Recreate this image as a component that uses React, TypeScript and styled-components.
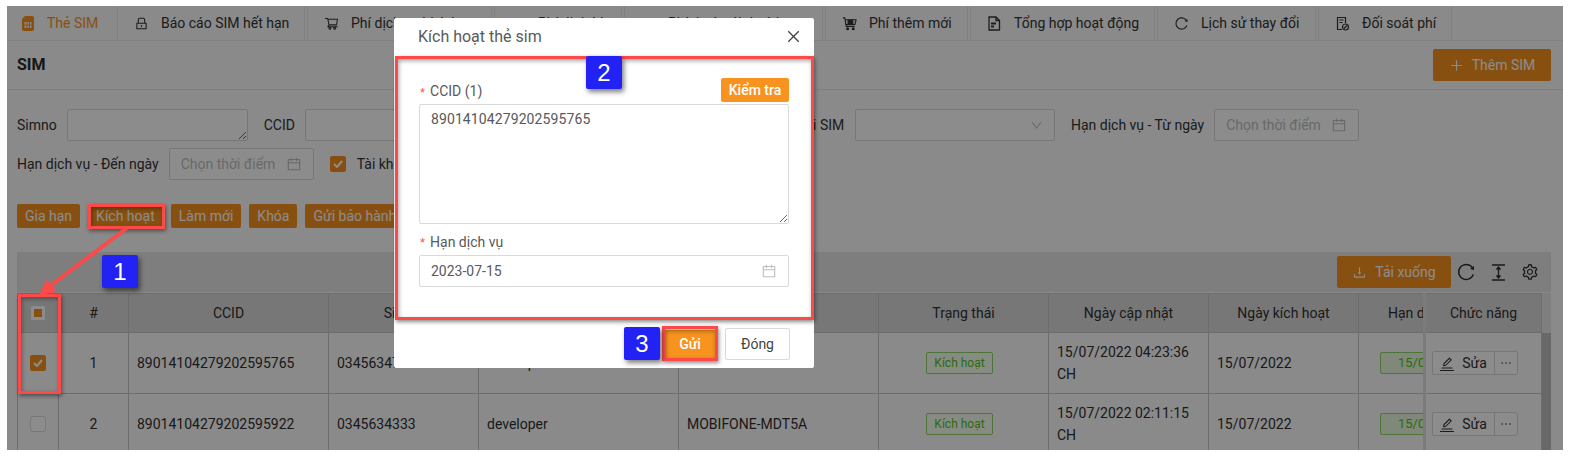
import React from "react";
import styled, { createGlobalStyle } from "styled-components";
import {
  AiOutlineCalendar,
  AiOutlineClose,
  AiOutlineDown,
  AiOutlineDownload,
  AiOutlineEdit,
  AiOutlineEllipsis,
  AiOutlineLock,
  AiOutlinePlus,
  AiOutlineReload,
  AiOutlineSetting,
  AiOutlineShoppingCart,
} from "react-icons/ai";

const ORANGE = "#f7931e";
const RED = "#fa4a4a";

const Global = createGlobalStyle`
  html, body { margin: 0; padding: 0; background: #fff; }
  body { font-family: Roboto, "Noto Sans", sans-serif; font-size: 14px; color: #333; }
  * { box-sizing: border-box; }
`;

const Stage = styled.div`
  position: relative;
  width: 1569px;
  height: 456px;
  overflow: hidden;
  padding: 6px 6px 6px 7px;
`;
const Page = styled.div`
  position: relative;
  height: 444px;
  overflow: hidden;
  background: #fbfbfb;
`;
const Overlay = styled.div`
  position: absolute;
  inset: 6px 6px 6px 7px;
  background: rgba(0, 0, 0, 0.45);
`;

const Tabs = styled.div`
  display: flex;
  gap: 2px;
  height: 35px;
  border-bottom: 1px solid #ececec;
`;
const Tab = styled.div<{ $active?: boolean; $w: number }>`
  display: flex;
  align-items: center;
  flex: none;
  width: ${(p) => p.$w}px;
  padding-left: ${(p) => (p.$active ? 15 : 16)}px;
  white-space: nowrap;
  color: ${(p) => (p.$active ? ORANGE : "#333")};
  border-right: ${(p) => (p.$active ? "0" : "1px solid #ececec")};
  border-left: ${(p) => (p.$active ? "0" : "1px solid #ececec")};
`;
const TabIcon = styled.span<{ $active?: boolean }>`
  display: inline-flex;
  width: ${(p) => (p.$active ? 25 : 27)}px;
  flex: none;
  font-size: 15px;
`;

const Header = styled.div`
  display: flex;
  align-items: center;
  justify-content: space-between;
  height: 49px;
  padding: 0 12px 0 10px;
  border-bottom: 1px solid #e6e6e6;
`;
const Title = styled.div`
  margin-bottom: 2px;
  font-size: 16px;
  font-weight: 700;
  color: #2a2a2a;
`;
const PrimaryButton = styled.div<{ $w: number }>`
  display: flex;
  align-items: center;
  justify-content: center;
  gap: 8px;
  width: ${(p) => p.$w}px;
  height: 32px;
  color: #fff;
  background: ${ORANGE};
  border-radius: 2px;
`;

const Filters = styled.div`
  display: flex;
  flex-direction: column;
  gap: 7px;
  padding: 19px 0 0 10px;
`;
const FilterRow = styled.div`
  display: flex;
  align-items: center;
  height: 32px;
`;
const FilterLabel = styled.label<{ $w?: number }>`
  flex: none;
  width: ${(p) => (p.$w ? `${p.$w}px` : "auto")};
  margin-right: 10px;
  white-space: nowrap;
`;
const FilterArea = styled.textarea`
  display: block;
  flex: none;
  width: 181px;
  height: 32px;
  min-height: 32px;
  margin: 0 16px 0 0;
  background: #fff;
  border: 1px solid #d9d9d9;
  border-radius: 2px;
  outline: none;
  font: inherit;
`;
const SelectBox = styled.div`
  display: flex;
  align-items: center;
  justify-content: flex-end;
  flex: none;
  width: 200px;
  height: 32px;
  margin-right: 16px;
  padding-right: 11px;
  color: #bfbfbf;
  font-size: 13px;
  background: #fff;
  border: 1px solid #d9d9d9;
  border-radius: 2px;
`;
const DateBox = styled.div<{ $w?: number }>`
  display: flex;
  align-items: center;
  justify-content: space-between;
  flex: none;
  width: ${(p) => (p.$w ? `${p.$w}px` : "100%")};
  height: 32px;
  padding: 0 11px;
  color: ${(p) => (p.$w ? "#bfbfbf" : "#595959")};
  background: #fff;
  border: 1px solid #d9d9d9;
  border-radius: 2px;
  svg { color: #bfbfbf; font-size: 16px; }
`;
const CheckLabel = styled.div`
  display: flex;
  align-items: center;
  gap: 11px;
  margin-left: 16px;
  white-space: nowrap;
`;
const CheckBox = styled.span<{ $on?: boolean; $mixed?: boolean }>`
  display: inline-flex;
  align-items: center;
  justify-content: center;
  flex: none;
  width: 16px;
  height: 16px;
  color: #fff;
  background: ${(p) => (p.$on ? ORANGE : "#fff")};
  border: 1px solid ${(p) => (p.$on ? ORANGE : "#d9d9d9")};
  border-radius: 2px;
  &::after {
    content: "";
    display: ${(p) => (p.$mixed ? "block" : "none")};
    width: 8px;
    height: 8px;
    background: ${ORANGE};
  }
`;
const Actions = styled.div`
  display: flex;
  gap: 8px;
  margin: 24px 0 24px 10px;
`;
const ActionButton = styled.div`
  display: flex;
  align-items: center;
  height: 24px;
  padding: 0 8px;
  color: #fff;
  background: ${ORANGE};
  border-radius: 2px;
  white-space: nowrap;
`;

const Toolbar = styled.div`
  display: flex;
  align-items: center;
  justify-content: flex-end;
  width: 1534px;
  height: 40px;
  margin-left: 10px;
  padding-right: 12px;
  background: #e6e6e6;
`;
const ToolIcons = styled.div`
  display: flex;
  align-items: center;
  gap: 16px;
  margin-left: 5px;
  color: #2e2e2e;
  font-size: 17px;
  svg { display: block; }
`;

const TableWrap = styled.div`
  display: flex;
  width: 1534px;
  margin: 1px 0 0 10px;
`;
const Scroller = styled.div`
  width: 1406px;
  flex: none;
  overflow: hidden;
`;
const FixedPane = styled.div`
  width: 119px;
  flex: none;
  border-left: 3px solid #dedede;
`;
const ScrollBar = styled.div`
  width: 9px;
  flex: none;
  background: linear-gradient(#e8e8e8 40px, #bdbdbd 40px);
`;
const Row = styled.div<{ $head?: boolean; $cols: string }>`
  display: grid;
  grid-template-columns: ${(p) => p.$cols};
  height: ${(p) => (p.$head ? 40 : 61)}px;
  background: ${(p) => (p.$head ? "#d9d9d9" : "#fcfcfc")};
  border-bottom: 1px solid #c6c6c6;
  border-top: ${(p) => (p.$head ? "1px solid #c6c6c6" : "0")};
  width: max-content;
`;
const Cell = styled.div<{ $head?: boolean; $center?: boolean; $first?: boolean }>`
  display: flex;
  align-items: center;
  justify-content: ${(p) => (p.$head || p.$center ? "center" : "flex-start")};
  padding: 0 8px;
  line-height: 22px;
  color: #303030;
  white-space: ${(p) => (p.$head ? "nowrap" : "normal")};
  border-right: 1px solid #c6c6c6;
  border-left: ${(p) => (p.$first ? "1px solid #c6c6c6" : "0")};
  overflow: hidden;
`;
const Tag = styled.span`
  display: inline-flex;
  align-items: center;
  justify-content: center;
  height: 22px;
  margin-right: 8px;
  padding: 0 7px;
  font-size: 12px;
  color: #52c41a;
  background: #f6ffed;
  border: 1px solid #8fd46a;
  border-radius: 2px;
  white-space: nowrap;
`;
const DateTag = styled(Tag)`
  flex: none;
  margin: 0 0 0 13px;
  padding: 0 17px;
  font-size: 13px;
  background: #e9f7df;
`;
const RowActions = styled.div`
  display: flex;
  height: 24px;
  margin-left: -2px;
  border: 1px solid #d9d9d9;
  border-radius: 2px;
  background: #fff;
`;
const EditButton = styled.div`
  display: flex;
  align-items: center;
  justify-content: center;
  gap: 8px;
  width: 61px;
  svg { display: block; }
`;
const EditGlyph = styled.span`
  display: inline-flex;
  border-bottom: 1px solid #333;
  font-size: 14px;
`;
const MoreButton = styled.div`
  display: flex;
  align-items: center;
  justify-content: center;
  width: 23px;
  border-left: 1px solid #d9d9d9;
`;

const Modal = styled.div`
  position: absolute;
  left: 394px;
  top: 18px;
  width: 420px;
  height: 350px;
  display: flex;
  flex-direction: column;
  background: #fff;
  border-radius: 2px;
  color: #595959;
`;
const ModalHead = styled.div`
  display: flex;
  align-items: center;
  justify-content: space-between;
  height: 37px;
  padding: 0 12px 0 24px;
  font-size: 16px;
  color: #595959;
  svg { display: block; font-size: 17px; color: #444; }
`;
const ModalBody = styled.div`
  display: flex;
  flex-direction: column;
  height: 265px;
  padding: 23px 25px 0 25px;
`;
const FieldLabelRow = styled.div`
  display: flex;
  align-items: center;
  justify-content: space-between;
  height: 26px;
  margin-bottom: 0;
`;
const FieldLabel = styled.div`
  display: flex;
  align-items: center;
  gap: 5px;
  padding-left: 1px;
  &::before {
    content: "*";
    color: #ff4d4f;
    font-family: "Liberation Sans", sans-serif;
    font-size: 13px;
    line-height: 1;
    padding-top: 2px;
  }
`;
const CheckButton = styled.div`
  display: flex;
  align-items: center;
  justify-content: center;
  align-self: flex-start;
  width: 68px;
  height: 24px;
  color: #fff;
  font-weight: 500;
  background: ${ORANGE};
  border-radius: 2px;
`;
const ModalArea = styled.textarea`
  display: block;
  width: 100%;
  height: 120px;
  margin: 0;
  padding: 5px 11px;
  color: #595959;
  font: inherit;
  line-height: 19px;
  border: 1px solid #d9d9d9;
  border-radius: 2px;
  outline: none;
  letter-spacing: 0.1px;
`;
const SecondLabel = styled(FieldLabel)`
  height: 31px;
  padding-top: 4px;
`;
const ModalFoot = styled.div`
  display: flex;
  align-items: center;
  justify-content: flex-end;
  gap: 10px;
  flex: 1;
  padding: 0 24px 0 0;
`;
const SendButton = styled.div`
  display: flex;
  align-items: center;
  justify-content: center;
  width: 50px;
  height: 28px;
  color: #fff;
  font-weight: 500;
  background: ${ORANGE};
`;
const CloseButton = styled.div`
  display: flex;
  align-items: center;
  justify-content: center;
  width: 65px;
  height: 32px;
  color: #444;
  border: 1px solid #d9d9d9;
  border-radius: 2px;
`;

const Badge = styled.div<{ $x: number; $y: number }>`
  position: absolute;
  left: ${(p) => p.$x}px;
  top: ${(p) => p.$y}px;
  width: 36px;
  height: 33px;
  display: flex;
  align-items: center;
  justify-content: center;
  color: #fff;
  background: #2222f5;
  border-radius: 2px;
  font-family: "Liberation Sans", sans-serif;
  font-size: 24px;
  box-shadow: 2px 3px 5px rgba(0, 0, 0, 0.5);
`;
const Mark = styled.div<{ $x: number; $y: number; $w: number; $h: number; $b?: number }>`
  position: absolute;
  left: ${(p) => p.$x}px;
  top: ${(p) => p.$y}px;
  width: ${(p) => p.$w}px;
  height: ${(p) => p.$h}px;
  border: ${(p) => p.$b ?? 3}px solid ${RED};
  box-shadow: 1px 2px 4px rgba(0, 0, 0, 0.45), inset 1px 2px 4px rgba(0, 0, 0, 0.35);
`;
const ArrowSvg = styled.svg`
  position: absolute;
  left: 0;
  top: 0;
  pointer-events: none;
`;

const SimIcon = () => (
  <svg width="12" height="15" viewBox="0 0 12 15" fill={ORANGE}>
    <path d="M3 0h7a2 2 0 0 1 2 2v11a2 2 0 0 1-2 2H2a2 2 0 0 1-2-2V3z" />
    <rect x="2.5" y="6" width="7" height="6" fill="#fbfbfb" />
    <path d="M5 6v6M7.5 6v6M2.5 9h7" stroke={ORANGE} strokeWidth="1" />
  </svg>
);
const FeeCartIcon = () => (
  <svg width="15" height="15" viewBox="0 0 16 16" fill="none" stroke="#333" strokeWidth="1.2">
    <path d="M1 2h2l1.5 9h9M3.6 4H15l-1.2 5H4.5" />
    <rect x="6.5" y="4.5" width="5" height="4" fill="#333" />
    <circle cx="6" cy="13.5" r="1" fill="#333" />
    <circle cx="12" cy="13.5" r="1" fill="#333" />
  </svg>
);
const FileSumIcon = () => (
  <svg width="14" height="15" viewBox="0 0 14 15" fill="none" stroke="#333" strokeWidth="1.3">
    <path d="M2 1h7l3.5 3.5V14H2z" />
    <path d="M9 1v3.5h3.5" />
    <rect x="4" y="6.5" width="5" height="2" fill="#333" stroke="none" />
    <rect x="4" y="9.5" width="3" height="2" fill="#333" stroke="none" />
  </svg>
);
const ReconcileIcon = () => (
  <svg width="15" height="15" viewBox="0 0 15 15" fill="none" stroke="#333" strokeWidth="1.2">
    <path d="M10.5 7V1.5h-8v12H7" />
    <path d="M4.5 4h4M4.5 6.5h3" />
    <circle cx="10.5" cy="11" r="3" />
    <path d="M9 12.5l3-3" />
  </svg>
);
const DensityIcon = () => (
  <svg width="13" height="17" viewBox="0 0 13 17" fill="none" stroke="#2e2e2e" strokeWidth="1.3">
    <path d="M0 1h13M0 16h13M6.5 3.5v10" />
    <path d="M4.5 5.5l2-2.5 2 2.5M4.5 11.5l2 2.5 2-2.5" fill="#2e2e2e" />
  </svg>
);
const Tick = () => (
  <svg width="10" height="8" viewBox="0 0 10 8" fill="none" stroke="#fff" strokeWidth="2">
    <path d="M1 4l3 3 5-6" />
  </svg>
);

const COLS = "42px 70px 200px 150px 200px 200px 170px 160px 150px 132px";
const FIXED = "116px";

const tabs: { label: string; w: number; icon: React.ReactNode; active?: boolean }[] = [
  { label: "Thẻ SIM", w: 108, icon: <SimIcon />, active: true },
  { label: "Báo cáo SIM hết hạn", w: 188, icon: <AiOutlineLock /> },
  { label: "Phí dịch vụ kích hoạt", w: 185, icon: <AiOutlineShoppingCart /> },
  { label: "Phí định kỳ", w: 128, icon: <AiOutlineShoppingCart /> },
  { label: "Phí thuê gói thuê bao", w: 199, icon: <AiOutlineShoppingCart /> },
  { label: "Phí thêm mới", w: 143, icon: <FeeCartIcon /> },
  { label: "Tổng hợp hoạt động", w: 185, icon: <FileSumIcon /> },
  { label: "Lịch sử thay đổi", w: 159, icon: <AiOutlineReload /> },
  { label: "Đối soát phí", w: 134, icon: <ReconcileIcon /> },
];

const head = ["", "#", "CCID", "Simno", "Tài khoản", "Gói cước", "Trạng thái", "Ngày cập nhật", "Ngày kích hoạt", "Hạn dịch vụ"];

const rows = [
  { n: "1", ccid: "89014104279202595765", sim: "0345634733", upd: "15/07/2022 04:23:36 CH", on: true },
  { n: "2", ccid: "89014104279202595922", sim: "0345634333", upd: "15/07/2022 02:11:15 CH", on: false },
];

export default function App() {
  return (
    <>
      <Global />
      <Stage>
        <Page>
          <Tabs>
            {tabs.map((t) => (
              <Tab key={t.label} $w={t.w} $active={t.active}>
                <TabIcon $active={t.active}>{t.icon}</TabIcon>
                {t.label}
              </Tab>
            ))}
          </Tabs>
          <Header>
            <Title>SIM</Title>
            <PrimaryButton $w={118}>
              <AiOutlinePlus size={15} />
              Thêm SIM
            </PrimaryButton>
          </Header>
          <Filters>
            <FilterRow>
              <FilterLabel>Simno</FilterLabel>
              <FilterArea readOnly />
              <FilterLabel>CCID</FilterLabel>
              <FilterArea readOnly />
              <FilterLabel $w={81}>Số điện thoại</FilterLabel>
              <FilterArea readOnly />
              <FilterLabel $w={55}>Loại SIM</FilterLabel>
              <SelectBox>
                <AiOutlineDown />
              </SelectBox>
              <FilterLabel>Hạn dịch vụ - Từ ngày</FilterLabel>
              <DateBox $w={145}>
                Chọn thời điểm
                <AiOutlineCalendar />
              </DateBox>
            </FilterRow>
            <FilterRow>
              <FilterLabel>Hạn dịch vụ - Đến ngày</FilterLabel>
              <DateBox $w={145}>
                Chọn thời điểm
                <AiOutlineCalendar />
              </DateBox>
              <CheckLabel>
                <CheckBox $on>
                  <Tick />
                </CheckBox>
                Tài khoản test
              </CheckLabel>
            </FilterRow>
          </Filters>
          <Actions>
            <ActionButton>Gia hạn</ActionButton>
            <ActionButton>Kích hoạt</ActionButton>
            <ActionButton>Làm mới</ActionButton>
            <ActionButton>Khóa</ActionButton>
            <ActionButton>Gửi bảo hành</ActionButton>
          </Actions>
          <Toolbar>
            <PrimaryButton $w={114}>
              <AiOutlineDownload size={15} />
              Tải xuống
            </PrimaryButton>
            <ToolIcons>
              <AiOutlineReload size={20} />
              <DensityIcon />
              <AiOutlineSetting size={18} />
            </ToolIcons>
          </Toolbar>
          <TableWrap>
            <Scroller>
              <Row $head $cols={COLS}>
                {head.map((h, i) => (
                  <Cell key={i} $head $first={i === 0}>
                    {i === 0 ? <CheckBox $mixed /> : h}
                  </Cell>
                ))}
              </Row>
              {rows.map((r) => (
                <Row key={r.n} $cols={COLS}>
                  <Cell $center $first>
                    <CheckBox $on={r.on}>{r.on && <Tick />}</CheckBox>
                  </Cell>
                  <Cell $center>{r.n}</Cell>
                  <Cell>{r.ccid}</Cell>
                  <Cell>{r.sim}</Cell>
                  <Cell>developer</Cell>
                  <Cell>MOBIFONE-MDT5A</Cell>
                  <Cell $center>
                    <Tag>Kích hoạt</Tag>
                  </Cell>
                  <Cell>{r.upd}</Cell>
                  <Cell>15/07/2022</Cell>
                  <Cell>
                    <DateTag>15/07/2023</DateTag>
                  </Cell>
                </Row>
              ))}
            </Scroller>
            <FixedPane>
              <Row $head $cols={FIXED}>
                <Cell $head>Chức năng</Cell>
              </Row>
              {rows.map((r) => (
                <Row key={r.n} $cols={FIXED}>
                  <Cell>
                    <RowActions>
                      <EditButton>
                        <EditGlyph>
                          <AiOutlineEdit />
                        </EditGlyph>
                        Sửa
                      </EditButton>
                      <MoreButton>
                        <AiOutlineEllipsis />
                      </MoreButton>
                    </RowActions>
                  </Cell>
                </Row>
              ))}
            </FixedPane>
            <ScrollBar />
          </TableWrap>
        </Page>
        <Overlay />
        <Modal>
          <ModalHead>
            Kích hoạt thẻ sim
            <AiOutlineClose />
          </ModalHead>
          <ModalBody>
            <FieldLabelRow>
              <FieldLabel>CCID (1)</FieldLabel>
              <CheckButton>Kiểm tra</CheckButton>
            </FieldLabelRow>
            <ModalArea readOnly defaultValue="89014104279202595765" />
            <SecondLabel>Hạn dịch vụ</SecondLabel>
            <DateBox>
              2023-07-15
              <AiOutlineCalendar />
            </DateBox>
          </ModalBody>
          <ModalFoot>
            <SendButton>Gửi</SendButton>
            <CloseButton>Đóng</CloseButton>
          </ModalFoot>
        </Modal>
        <Mark $x={88} $y={204} $w={77} $h={25} />
        <Mark $x={18} $y={294} $w={43} $h={100} />
        <Mark $x={395} $y={56} $w={419} $h={264} />
        <Mark $x={662} $y={326} $w={56} $h={35} />
        <ArrowSvg width="1569" height="456">
          <path d="M127 228 L50 286" stroke={RED} strokeWidth="4" />
          <path d="M39 295 L47 279 L57 292 Z" fill={RED} />
        </ArrowSvg>
        <Badge $x={102} $y={255}>1</Badge>
        <Badge $x={586} $y={56}>2</Badge>
        <Badge $x={624} $y={327}>3</Badge>
      </Stage>
    </>
  );
}
